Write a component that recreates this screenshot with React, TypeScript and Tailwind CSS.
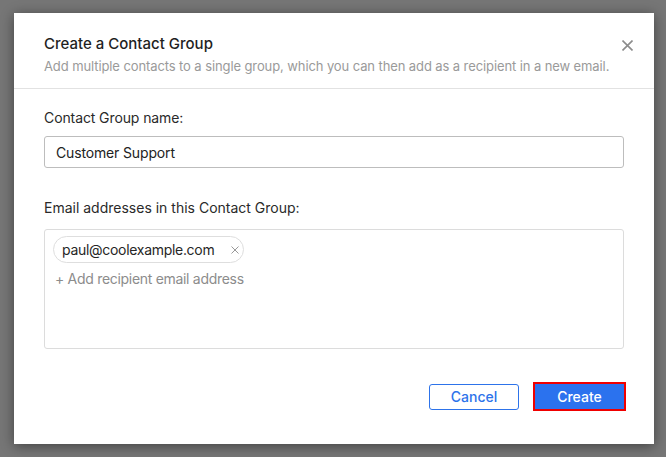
function Cross({ size, stroke = 1.5, className = '' }: { size: number; stroke?: number; className?: string }) {
  return (
    <svg width={size} height={size} viewBox={`0 0 ${size} ${size}`} className={className} fill="none">
      <path d={`M0.5 0.5L${size - 0.5} ${size - 0.5}M${size - 0.5} 0.5L0.5 ${size - 0.5}`} stroke="currentColor" strokeWidth={stroke} />
    </svg>
  )
}

export default function App() {
  return (
    <div
      className="w-[666px] h-[457px] bg-[#767676] pl-[14px] pt-[13px]"
      style={{ fontFamily: 'Inter, "Noto Sans", sans-serif' }}
    >
      <div className="w-[640px] h-[431px] bg-white shadow-[0_2px_12px_rgba(0,0,0,0.45)] flex flex-col">
        {/* Header */}
        <div className="relative px-[30px] pt-[21px] pb-[13px] border-b border-[#e2e2e2]">
          <h2 className="text-[15px] leading-[20px] font-medium text-[#1f1f1f]">Create a Contact Group</h2>
          <p className="mt-[3px] text-[13px] leading-[18px] tracking-[-0.1px] text-[#9a9a9a]">
            Add multiple contacts to a single group, which you can then add as a recipient in a new email.
          </p>
          <button className="absolute right-[21px] top-[27px] text-[#8c8c8c]">
            <Cross size={11} stroke={1.6} />
          </button>
        </div>

        {/* Body */}
        <div className="px-[30px] pt-[20px] flex flex-col">
          <label className="text-[14px] leading-[18px] tracking-[-0.1px] text-[#2a2a2a]">Contact Group name:</label>
          <div className="mt-[9px] h-[32px] border border-[#bdbdbd] rounded-[3px] flex items-center px-[11px] text-[14px] tracking-[-0.15px] text-[#222]">
            Customer Support
          </div>

          <label className="mt-[31px] text-[14px] leading-[18px] text-[#2a2a2a]">
            Email addresses in this Contact Group:
          </label>
          <div className="mt-[12px] h-[120px] border border-[#dcdcdc] rounded-[3px] px-[8px] pt-[6px]">
            <div className="inline-flex items-center h-[27px] pl-[8px] pr-[4px] border border-[#dedede] rounded-full text-[14px] tracking-[-0.3px] text-[#262626]">
              paul@coolexample.com
              <Cross size={8} stroke={1} className="ml-[17px] text-[#999]" />
            </div>
            <div className="mt-[7px] pl-[2px] text-[14px] leading-[18px] tracking-[-0.3px] text-[#8c8c8c]">+ Add recipient email address</div>
          </div>
        </div>

        {/* Footer */}
        <div className="flex justify-end items-center gap-[14px] pt-[33px] pr-[28px]">
          <button className="w-[90px] h-[26px] border border-[#2d73ea] rounded-[3px] text-[14px] font-medium text-[#2d73ea] bg-white">
            Cancel
          </button>
          <button className="w-[93px] h-[29px] border-2 border-[#f00000] bg-[#2b72ee] text-[14px] font-medium text-white">
            Create
          </button>
        </div>
      </div>
    </div>
  )
}
